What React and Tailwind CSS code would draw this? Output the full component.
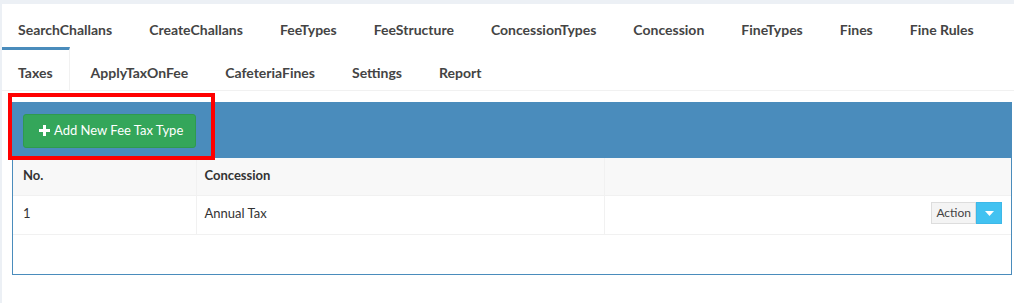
const tabs = [
  'SearchChallans', 'CreateChallans', 'FeeTypes', 'FeeStructure', 'ConcessionTypes',
  'Concession', 'FineTypes', 'Fines', 'Fine Rules', 'Taxes', 'ApplyTaxOnFee',
  'CafeteriaFines', 'Settings', 'Report',
];

export default function App() {
  return (
    <div className="h-[303px] w-[1014px] bg-[#ecf0f5] pt-[4px] pl-[2px] font-['Lato','Liberation_Sans',sans-serif] text-[13px] text-[#333]">
      <div className="h-full bg-white">
        {/* Tabs */}
        <ul className="flex flex-wrap border-b border-[#f1f1f1]">
          {tabs.map((t) => {
            const active = t === 'Taxes';
            return (
              <li
                key={t}
                className={
                  active
                    ? 'mr-[5px] h-[43px] border-t-[3px] border-r border-t-[#4a8cbc] border-r-[#f1f1f1] px-[16px] pt-[12px] text-[14px] font-bold text-[#444]'
                    : 'mr-[5px] h-[43px] border-t-[3px] border-transparent px-[16px] pt-[12px] text-[14px] font-bold text-[#444]'
                }
              >
                {t}
              </li>
            );
          })}
        </ul>

        {/* Panel */}
        <div className="relative mt-[11px] ml-[10px] mr-[2px] border border-[#4a8cbc]">
          <div className="flex h-[55px] items-center bg-[#4a8cbc] px-[10px]">
            <button className="flex h-[34px] items-center gap-[4px] rounded-[3px] border border-[#2f9a4e] bg-[#34a65a] pl-[15px] pr-[12px] text-[13px] text-white">
              <svg width="11" height="11" viewBox="0 0 11 11"><path d="M4 0h3v4h4v3H7v4H4V7H0V4h4z" fill="white" /></svg>
              Add New Fee Tax Type
            </button>
          </div>

          <table className="w-full border-collapse">
            <thead>
              <tr className="h-[37px] bg-[#f8f8f8] text-left">
                <th className="w-[183px] border-r border-[#f1f1f1] px-[10px] pb-[2px] font-bold">No.</th>
                <th className="w-[408px] border-r border-[#f1f1f1] px-[8px] pb-[2px] font-bold">Concession</th>
                <th></th>
              </tr>
            </thead>
            <tbody>
              <tr className="h-[39px] border-t border-b border-[#f1f1f1]">
                <td className="border-r border-[#f1f1f1] px-[10px] pb-[1px]">1</td>
                <td className="border-r border-[#f1f1f1] px-[8px] pb-[1px]">Annual Tax</td>
                <td className="pr-[9px] pb-[3px]">
                  <div className="flex justify-end">
                    <span className="flex h-[22px] items-center border border-[#ddd] bg-[#f4f4f4] px-[4px] text-[12px] text-[#444]">Action</span>
                    <span className="flex h-[22px] w-[26px] items-center justify-center border border-[#3db8e8] bg-[#42c2f1]">
                      <svg width="9" height="5" viewBox="0 0 9 5"><path d="M0 0h9L4.5 5z" fill="white" /></svg>
                    </span>
                  </div>
                </td>
              </tr>
            </tbody>
          </table>
          <div className="h-[39px]"></div>

          {/* annotation box */}
          <div className="absolute left-[-5px] top-[-10px] h-[67px] w-[207px] border-[4px] border-[#ff0000]"></div>
        </div>
      </div>
    </div>
  );
}
